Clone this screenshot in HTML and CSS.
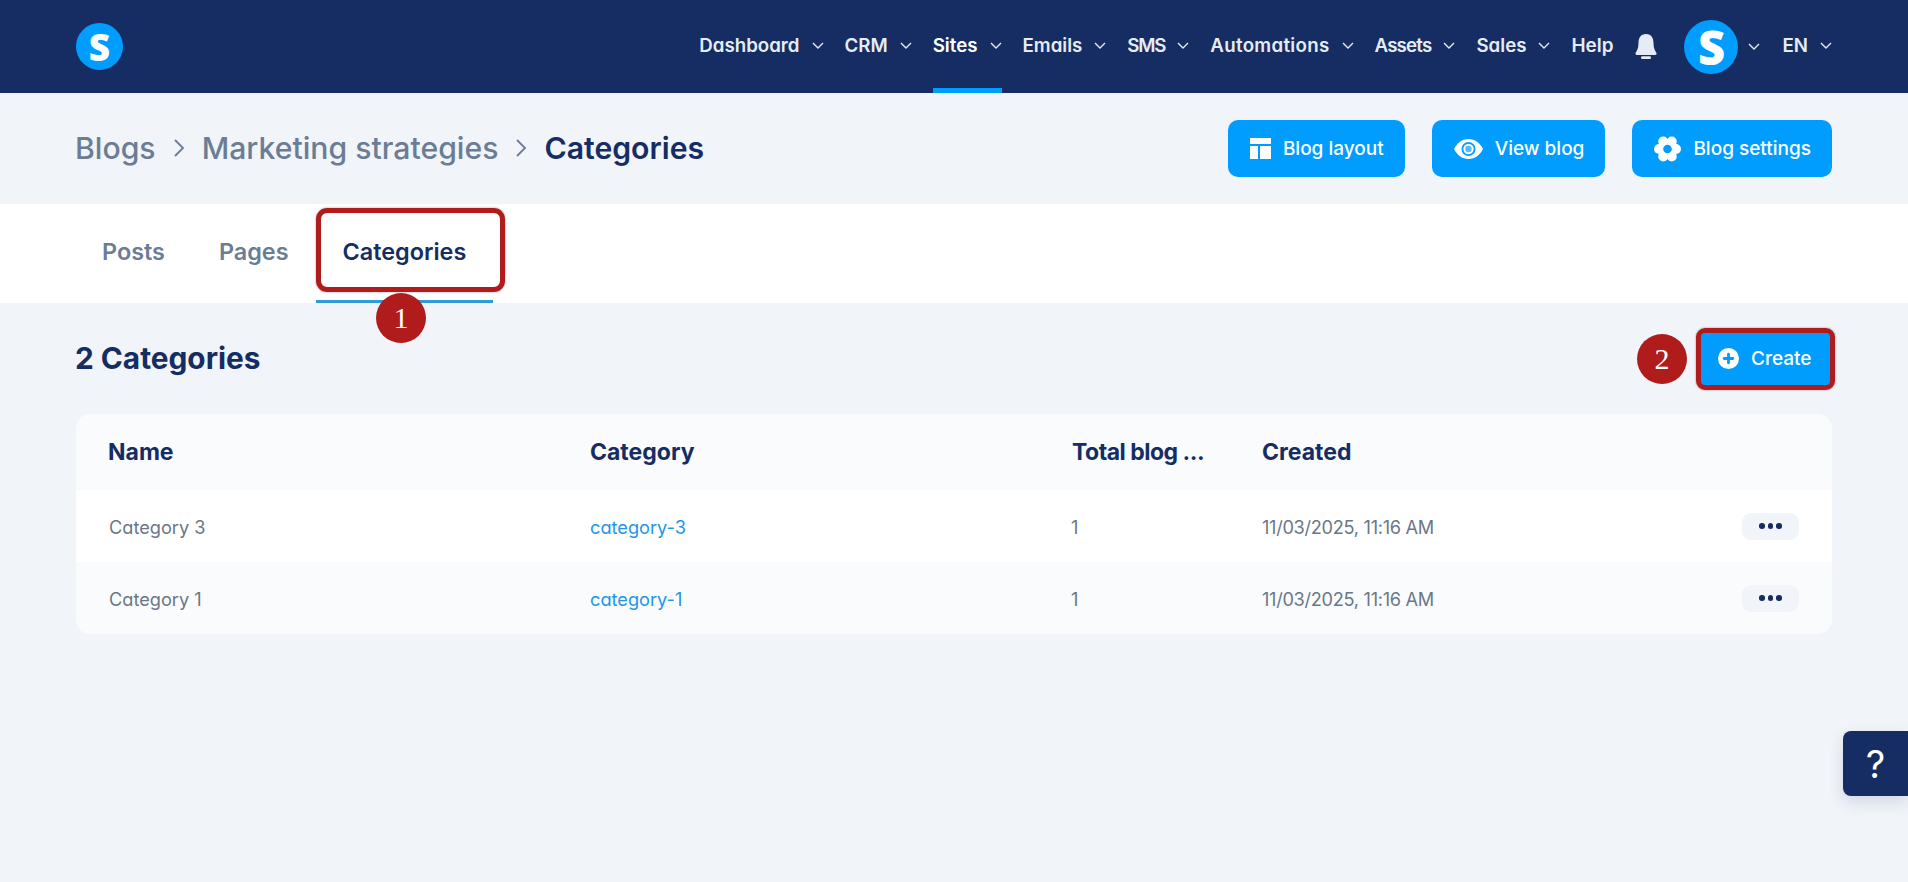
FILE: index.html
```html
<!DOCTYPE html>
<html lang="en">
<head>
<meta charset="utf-8">
<title>Categories</title>
<link rel="stylesheet" href="styles.css">
</head>
<body>
<header class="topbar">
  <div class="logo">S</div>
  <nav class="nav">
    <a class="nav-item">Dashboard<svg class="chev" viewBox="0 0 12 7"><path d="M1 1l5 5 5-5"/></svg></a>
    <a class="nav-item">CRM<svg class="chev" viewBox="0 0 12 7"><path d="M1 1l5 5 5-5"/></svg></a>
    <a class="nav-item active">Sites<svg class="chev" viewBox="0 0 12 7"><path d="M1 1l5 5 5-5"/></svg></a>
    <a class="nav-item">Emails<svg class="chev" viewBox="0 0 12 7"><path d="M1 1l5 5 5-5"/></svg></a>
    <a class="nav-item nav-sms">SMS<svg class="chev" viewBox="0 0 12 7"><path d="M1 1l5 5 5-5"/></svg></a>
    <a class="nav-item nav-wide">Automations<svg class="chev" viewBox="0 0 12 7"><path d="M1 1l5 5 5-5"/></svg></a>
    <a class="nav-item nav-assets">Assets<svg class="chev" viewBox="0 0 12 7"><path d="M1 1l5 5 5-5"/></svg></a>
    <a class="nav-item">Sales<svg class="chev" viewBox="0 0 12 7"><path d="M1 1l5 5 5-5"/></svg></a>
    <a class="nav-item nav-help">Help</a>
    <svg class="bell" viewBox="0 0 22 25"><path d="M11 0C5.500 0 3.500 4 3.500 9c0 5-1.500 8-2.700 9.500C0 19.500.5 21 2 21h18c1.500 0 2-1.500 1.200-2.500C20 17 18.500 14 18.500 9c0-5-2-9-7.500-9z"/><rect x="6" y="22.300" width="10" height="2.700" rx="1.300"/></svg>
    <div class="avatar">S</div>
    <svg class="chev chev-avatar" viewBox="0 0 12 7"><path d="M1 1l5 5 5-5"/></svg>
    <a class="nav-item lang">EN<svg class="chev" viewBox="0 0 12 7"><path d="M1 1l5 5 5-5"/></svg></a>
  </nav>
</header>

<section class="pagehead">
  <div class="crumbs">
    <span>Blogs</span>
    <svg class="crumb-sep" viewBox="0 0 12 20"><path d="M2 2l8 8-8 8"/></svg>
    <span>Marketing strategies</span>
    <svg class="crumb-sep" viewBox="0 0 12 20"><path d="M2 2l8 8-8 8"/></svg>
    <span class="crumb-current">Categories</span>
  </div>
  <div class="actions">
    <button class="btn"><svg class="btn-icon layout" viewBox="0 0 21 21"><path d="M0 0h21v6H0zM0 8h8v13H0zM10 8h11v13H10z"/></svg>Blog layout</button>
    <button class="btn"><svg class="btn-icon eye" viewBox="0 0 29 20"><path d="M14.500 0C8 0 3 4 0 10c3 6 8 10 14.500 10S26 16 29 10C26 4 21 0 14.500 0z"/><circle class="ico-hole" cx="14.500" cy="10" r="7"/><circle cx="14.500" cy="10" r="5.200"/><circle class="ico-pupil" cx="14.500" cy="10" r="3.200"/></svg>View blog</button>
    <button class="btn"><svg class="btn-icon gear" viewBox="0 0 27 26"><circle cx="22" cy="13" r="5"/><circle cx="17.750" cy="5.600" r="5"/><circle cx="9.250" cy="5.600" r="5"/><circle cx="5" cy="13" r="5"/><circle cx="9.250" cy="20.400" r="5"/><circle cx="17.750" cy="20.400" r="5"/><circle cx="13.500" cy="13" r="8.500"/><circle class="ico-hole" cx="13.500" cy="13" r="4.300"/></svg>Blog settings</button>
  </div>
</section>

<nav class="tabs">
  <a class="tab">Posts</a>
  <a class="tab">Pages</a>
  <a class="tab tab-active">Categories</a>
</nav>

<main class="content">
  <div class="listhead">
    <h1 class="count">2 Categories</h1>
    <button class="btn btn-create"><svg class="plus" viewBox="0 0 22 22"><circle cx="11" cy="11" r="11" fill="#fff"/><path d="M11 6.500v9M6.500 11h9"/></svg>Create</button>
  </div>
  <div class="table">
    <div class="row row-head">
      <div>Name</div><div>Category</div><div class="clipped">Total blog ...</div><div>Created</div><div></div>
    </div>
    <div class="row row-white">
      <div class="cell">Category 3</div><div class="cell link">category-3</div><div class="cell num">1</div><div class="cell date">11/03/2025, 11:16 AM</div>
      <div class="more"><span></span><span></span><span></span></div>
    </div>
    <div class="row">
      <div class="cell">Category 1</div><div class="cell link">category-1</div><div class="cell num">1</div><div class="cell date">11/03/2025, 11:16 AM</div>
      <div class="more"><span></span><span></span><span></span></div>
    </div>
  </div>
</main>

<div class="mark mark-tab"></div>
<div class="bubble bubble-1">1</div>
<div class="mark mark-create"></div>
<div class="bubble bubble-2">2</div>

<div class="help">?</div>
</body>
</html>
```

FILE: styles.css
```css
* { box-sizing: border-box; }
html, body { height: 100%; }
body {
  margin: 0;
  background: #f1f4f9;
  font-family: Inter, "Liberation Sans", sans-serif;
  color: #152d62;
  overflow: hidden;
  position: relative;
}
.topbar {
  height: 93px;
  background: #152d62;
  display: flex;
  align-items: center;
  justify-content: space-between;
  padding: 0 76px;
}
.logo, .avatar {
  border-radius: 50%;
  background: #009dff;
  color: #fff;
  font-family: "Open Sans", sans-serif;
  font-weight: 800;
  display: flex;
  align-items: center;
  justify-content: center;
}
.logo { width: 47px; height: 47px; font-size: 37px; }
.avatar { width: 54px; height: 54px; font-size: 47px; margin-right: 10px; }
.nav { display: flex; align-items: center; height: 100%; }
.nav-item {
  position: relative;
  height: 100%;
  display: flex;
  align-items: center;
  margin-right: 21px;
  padding-bottom: 2px;
  font-size: 18.700px;
  font-weight: 600;
  font-feature-settings: "cv11";
  color: #e6ecf5;
}
.nav-sms { letter-spacing: -1.200px; }
.nav-assets { letter-spacing: -0.800px; }
.nav-wide { letter-spacing: 0.300px; }
.nav-help { margin-right: 22px; font-size: 18.900px; }
.nav-item.active { color: #fff; }
.nav-item.active::after {
  content: "";
  position: absolute;
  left: 0; right: 0; bottom: 0;
  height: 5px;
  background: #009dff;
}
.chev {
  width: 12px;
  height: 7px;
  margin-left: 12px;
  fill: none;
  stroke: #e6ecf5;
  stroke-width: 1.400;
}
.chev-avatar { margin: 0 22px 0 0; }
.lang { margin-right: 0; }
.bell { width: 22px; height: 25px; fill: #e6ecf5; margin: 0 27px 0 0; }
.pagehead {
  height: 111px;
  display: flex;
  align-items: center;
  justify-content: space-between;
  padding: 0 76px;
}
.crumbs {
  display: flex;
  align-items: center;
  gap: 17px;
  margin-left: -1px;
  padding-bottom: 2px;
  font-size: 30.200px;
  font-weight: 500;
  color: #6b7d95;
}
.crumb-sep { width: 12px; height: 20px; fill: none; stroke: #6b7d95; stroke-width: 1.800; }
.crumb-current { color: #152d62; font-weight: 600; }
.actions { display: flex; gap: 27px; }
.btn {
  height: 57px;
  padding: 0 21px 0 22px;
  border: 0;
  border-radius: 10px;
  background: #009dff;
  color: #fff;
  font-family: inherit;
  font-size: 19px;
  font-weight: 500;
  display: flex;
  align-items: center;
  gap: 12px;
}
.btn-icon { fill: #fff; }
.btn-icon.layout { width: 21px; height: 21px; }
.btn-icon.eye { width: 29px; height: 20px; }
.btn-icon.gear { width: 27px; height: 26px; }
.ico-hole { fill: #009dff; }
.ico-pupil { fill: #58b9fb; }
.tabs {
  height: 99px;
  background: #fff;
  display: flex;
  padding-left: 75px;
}
.tab {
  position: relative;
  display: flex;
  align-items: center;
  padding: 0 27px;
  margin-bottom: 4px;
  font-size: 23.400px;
  font-weight: 600;
  color: #6b7d95;
}
.tab-active { color: #152d62; }
.tab-active::after {
  content: "";
  position: absolute;
  left: 0; right: 0; bottom: -4px;
  height: 3px;
  background: #2f9bd9;
}
.content { padding: 0 76px; }
.listhead {
  height: 111px;
  display: flex;
  align-items: center;
  justify-content: space-between;
}
.count { margin: 0 0 2px -1px; font-size: 29.800px; font-weight: 700; }
.btn-create { width: 132px; height: 54px; padding: 0 0 0 18px; gap: 12px; border-radius: 4px; }
.plus { width: 21px; height: 21px; fill: none; stroke: #009dff; stroke-width: 3; stroke-linecap: round; }
.plus circle { stroke: none; }
.table { border-radius: 14px; overflow: hidden; background: #f9fbfd; }
.row {
  height: 72px;
  display: grid;
  grid-template-columns: 482px 482px 190px 1fr 57px;
  align-items: center;
  padding: 0 33px 0 32px;
  font-size: 18.200px;
  color: #6b7787;
  font-feature-settings: "cv11";
}
.row-head {
  height: 76px;
  font-size: 23px;
  font-weight: 700;
  color: #152d62;
  font-feature-settings: normal;
}
.clipped { letter-spacing: -0.500px; }
.row-white { background: #fff; }
.cell { padding: 2px 0 0 1px; }
.link { color: #1f96e8; padding-left: 0; }
.num { padding-left: 0; margin-left: -1px; }
.date { letter-spacing: -0.300px; padding-left: 0; }
.more {
  height: 27px;
  border-radius: 9px;
  background: #f1f4f9;
  display: flex;
  align-items: center;
  justify-content: center;
  gap: 3px;
}
.more span { width: 5.500px; height: 5.500px; border-radius: 50%; background: #152d62; }
.mark {
  position: absolute;
  border: 5px solid #b01c1c;
  border-radius: 11px;
  box-shadow: 0 0 2px rgba(60, 60, 60, .6);
}
.mark-tab { left: 316px; top: 208px; width: 189px; height: 84px; }
.mark-create { left: 1696px; top: 328px; width: 139px; height: 62px; border-radius: 9px; }
.bubble {
  position: absolute;
  width: 50px;
  height: 50px;
  border-radius: 50%;
  background: #b01c1c;
  color: #fff;
  font-family: "Liberation Serif", serif;
  font-size: 30px;
  display: flex;
  align-items: center;
  justify-content: center;
}
.bubble-1 { left: 376px; top: 293px; }
.bubble-2 { left: 1637px; top: 334px; }
.help {
  position: absolute;
  left: 1843px;
  top: 731px;
  width: 65px;
  height: 65px;
  border-radius: 8px 0 0 8px;
  background: #152d62;
  color: #fff;
  font-size: 38px;
  font-weight: 400;
  display: flex;
  align-items: center;
  justify-content: center;
  box-shadow: 0 6px 16px rgba(21, 45, 98, .14);
}
```
